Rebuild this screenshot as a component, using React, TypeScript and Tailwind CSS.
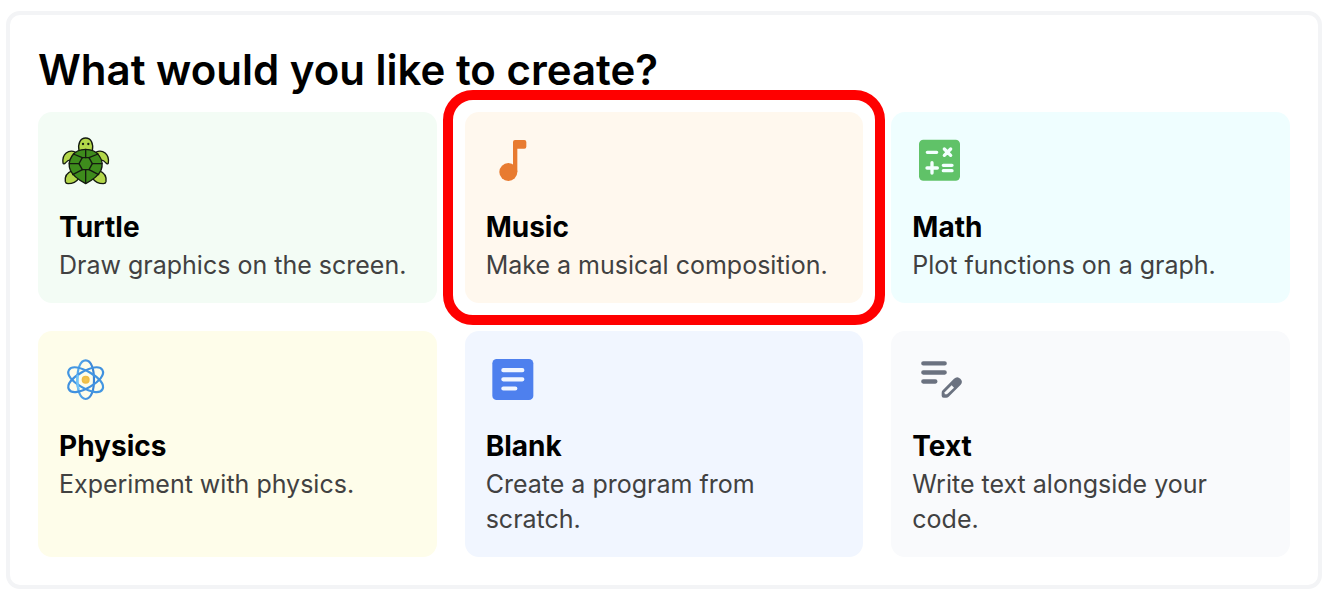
import type { ReactNode } from "react";

function TurtleIcon() {
  return (
    <svg viewBox="27 9 165 165" className="size-[55px]" aria-hidden="true">
      <g stroke="#141b10" strokeWidth="4" strokeLinejoin="round" strokeLinecap="round">
        <g fill="#b3d74a">
          <path d="M87 62C83 40 91 24 107 24S131 40 127 62Z" />
          <path d="M76 66C55 58 36 72 39 98C39 102 43 103 46 99C50 93 56 90 64 89Z" />
          <path d="M138 66C159 58 178 72 175 98C175 102 171 103 168 99C164 93 158 90 150 89Z" />
          <path d="M67 122C51 128 44 141 46 155C47 160 50 161 54 161C68 161 79 156 86 145Z" />
          <path d="M147 122C163 128 170 141 168 155C167 160 164 161 160 161C146 161 135 156 128 145Z" />
        </g>
        <path
          d="M107 58C124 58 140 66 148 78C157 91 158 108 153 121C145 139 126 151 107 161C88 151 69 139 61 121C56 108 57 91 66 78C74 66 90 58 107 58Z"
          fill="#3e8c1c"
        />
        <path d="M97 83H117L127 101L117 119H97L87 101Z" fill="#3e8c1c" />
        <path
          d="M107 58V83M107 119V160M87 101H58M127 101H156M97 83L70 72M117 83L144 72M97 119L68 134M117 119L146 134"
          fill="none"
        />
      </g>
      <g fill="#141b10">
        <circle cx="99" cy="42" r="3.5" />
        <circle cx="115" cy="42" r="3.5" />
      </g>
    </svg>
  );
}

function MusicIcon() {
  return (
    <svg viewBox="17 9 165 165" className="size-[55px]" fill="#e87b30" aria-hidden="true">
      <circle cx="84" cy="126" r="27" />
      <path d="M98 36Q98 30 104 30H132Q138 30 138 36V50Q138 56 132 56H111V126H98Z" />
    </svg>
  );
}

function MathIcon() {
  return (
    <svg viewBox="21 9 165 165" className="size-[55px]" aria-hidden="true">
      <rect x="42" y="29" width="123" height="123" rx="13" fill="#60c268" />
      <path
        d="M67 67H95M118 57L137 76M137 57L118 76M81 98V129M66 114H97M115 106H141M115 122H141"
        fill="none"
        stroke="#f2ffff"
        strokeWidth="10"
        strokeLinecap="round"
      />
    </svg>
  );
}

const orbit = "M107 31C124 31 132 58 132 89S124 147 107 147S82 120 82 89S90 31 107 31Z";

function PhysicsIcon() {
  return (
    <svg viewBox="27 6 165 165" className="size-[55px]" aria-hidden="true">
      <defs>
        <linearGradient id="orbit-down" gradientUnits="userSpaceOnUse" x1="80" y1="89" x2="134" y2="89">
          <stop offset="0" stopColor="#55abee" />
          <stop offset="1" stopColor="#3b83d4" />
        </linearGradient>
        <radialGradient id="nucleus">
          <stop offset="0" stopColor="#f4c653" />
          <stop offset="1" stopColor="#eebb43" />
        </radialGradient>
      </defs>
      <g fill="none" strokeWidth="6.5">
        <path d={orbit} stroke="url(#orbit-down)" />
        <path d={orbit} transform="rotate(-60 107 89)" stroke="#4396e2" />
        <path d={orbit} transform="rotate(60 107 89)" stroke="#4091df" />
        <path d="M83 74C80 91 82 106 86 119" stroke="#72c6f9" />
      </g>
      <circle cx="107" cy="89" r="12" fill="url(#nucleus)" />
    </svg>
  );
}

function BlankIcon() {
  return (
    <svg viewBox="17 6 165 165" className="size-[55px]" aria-hidden="true">
      <rect x="36" y="27" width="123" height="123" rx="13" fill="#4e80ee" />
      <path
        d="M69 60.5H126M69 88H126M69 115.5H105"
        fill="none"
        stroke="#f1f6ff"
        strokeWidth="12.5"
        strokeLinecap="round"
      />
    </svg>
  );
}

function TextIcon() {
  return (
    <svg viewBox="22 6 165 165" className="size-[55px]" aria-hidden="true">
      <path
        d="M56 40H120M56 67.5H120M56 94.5H92"
        fill="none"
        stroke="#6b7280"
        strokeWidth="13"
        strokeLinecap="round"
      />
      <path
        d="M111 128Q111 124 114 121L148 86Q158 77 167 86Q176 95 168 104L132 140Q129 143 125 143H117Q111 143 111 137Z"
        fill="#6b7280"
      />
      <path d="M120 127L141 106L148 113L127 133H120Z" fill="#f9fafb" />
    </svg>
  );
}

type Option = {
  title: string;
  description: string;
  background: string;
  icon: ReactNode;
  highlighted?: boolean;
};

const options: Option[] = [
  { title: "Turtle", description: "Draw graphics on the screen.", background: "bg-[#f3fcf5]", icon: <TurtleIcon /> },
  {
    title: "Music",
    description: "Make a musical composition.",
    background: "bg-[#fff8ee]",
    icon: <MusicIcon />,
    highlighted: true,
  },
  { title: "Math", description: "Plot functions on a graph.", background: "bg-[#effeff]", icon: <MathIcon /> },
  { title: "Physics", description: "Experiment with physics.", background: "bg-[#fefdea]", icon: <PhysicsIcon /> },
  {
    title: "Blank",
    description: "Create a program from scratch.",
    background: "bg-[#f1f6ff]",
    icon: <BlankIcon />,
  },
  { title: "Text", description: "Write text alongside your code.", background: "bg-[#f9fafc]", icon: <TextIcon /> },
];

function OptionCard({ title, description, background, icon, highlighted }: Option) {
  return (
    <button
      type="button"
      className={`relative flex cursor-pointer flex-col items-start rounded-[14px] px-[21px] pt-[21px] pb-5 text-left ${background}`}
    >
      {icon}
      <span className="mt-[18px] text-[28px] leading-[42px] font-bold text-black">{title}</span>
      <span className="text-[25px] leading-[35px] text-[#414141]">{description}</span>
      {highlighted && (
        <span className="pointer-events-none absolute -inset-[22px] z-10 rounded-[30px] border-[10px] border-[#ff0000]" />
      )}
    </button>
  );
}

export default function App() {
  return (
    <main className="bg-white pt-[11px] pr-[11px] pb-3 pl-[6px] font-['Inter',sans-serif]">
      <section className="rounded-[14px] border-4 border-gray-100 p-7">
        <h1 className="text-[42px] leading-[54px] font-semibold text-black">What would you like to create?</h1>
        <div className="mt-[15px] grid grid-cols-3 gap-7">
          {options.map((option) => (
            <OptionCard key={option.title} {...option} />
          ))}
        </div>
      </section>
    </main>
  );
}
